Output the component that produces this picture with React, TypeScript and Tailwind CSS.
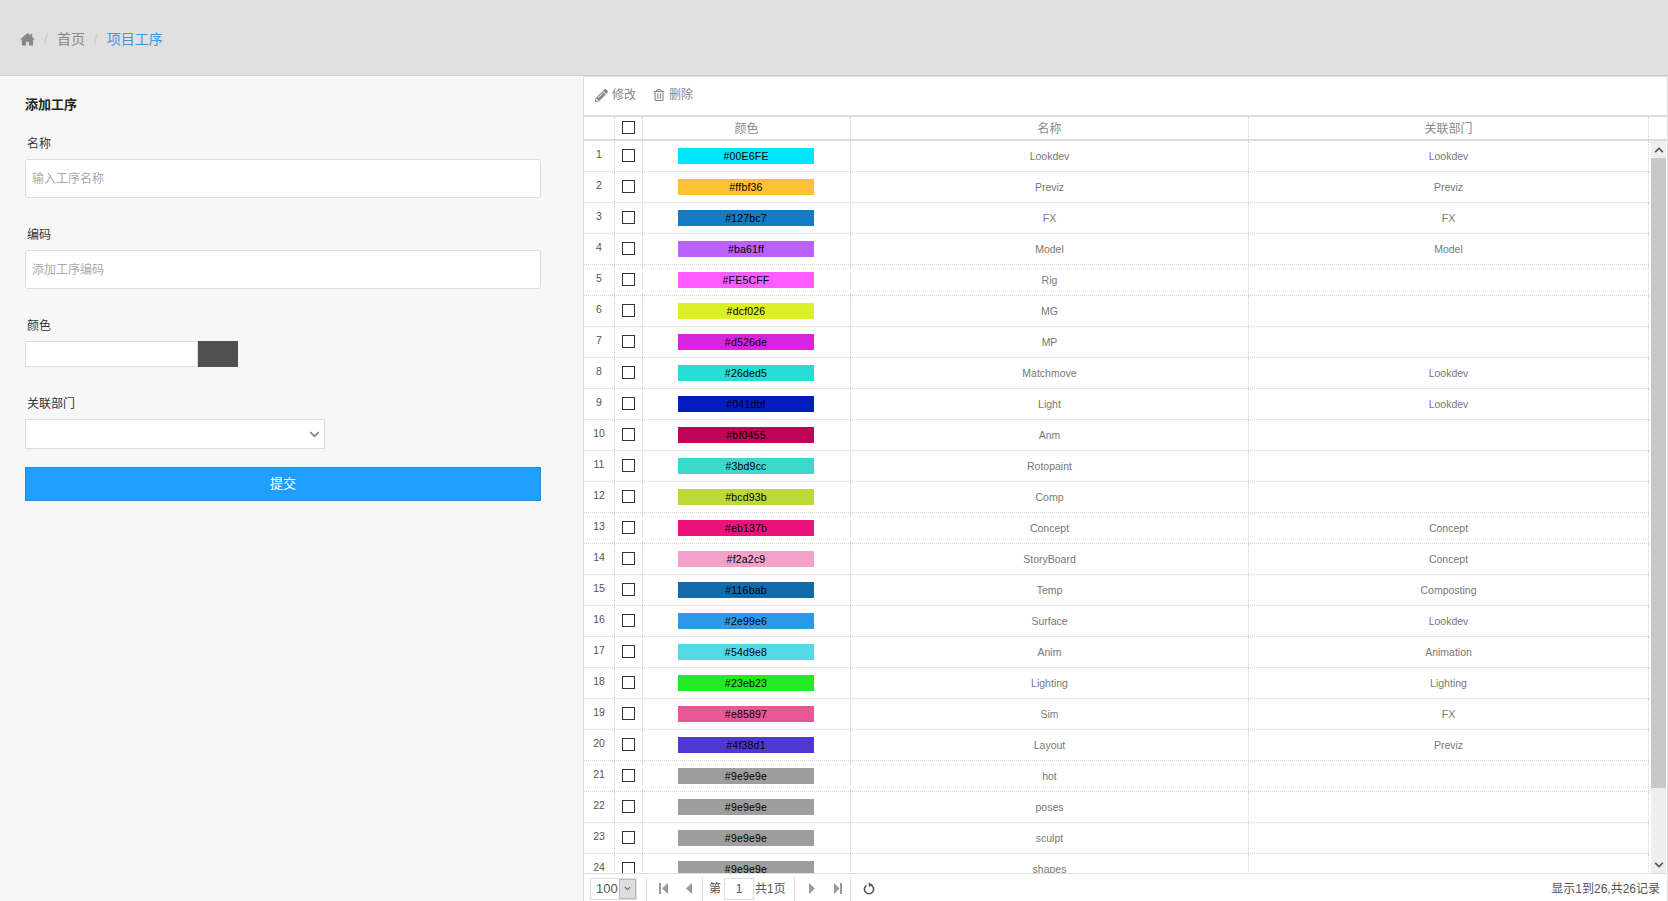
import { FaPencilAlt, FaRegTrashAlt, FaChevronDown, FaChevronUp } from "react-icons/fa";

const rows = [
  ["#00E6FE", "Lookdev", "Lookdev"],
  ["#ffbf36", "Previz", "Previz"],
  ["#127bc7", "FX", "FX"],
  ["#ba61ff", "Model", "Model"],
  ["#FE5CFF", "Rig", ""],
  ["#dcf026", "MG", ""],
  ["#d526de", "MP", ""],
  ["#26ded5", "Matchmove", "Lookdev"],
  ["#041dbf", "Light", "Lookdev"],
  ["#bf0455", "Anm", ""],
  ["#3bd9cc", "Rotopaint", ""],
  ["#bcd93b", "Comp", ""],
  ["#eb137b", "Concept", "Concept"],
  ["#f2a2c9", "StoryBoard", "Concept"],
  ["#116bab", "Temp", "Composting"],
  ["#2e99e6", "Surface", "Lookdev"],
  ["#54d9e8", "Anim", "Animation"],
  ["#23eb23", "Lighting", "Lighting"],
  ["#e85897", "Sim", "FX"],
  ["#4f38d1", "Layout", "Previz"],
  ["#9e9e9e", "hot", ""],
  ["#9e9e9e", "poses", ""],
  ["#9e9e9e", "sculpt", ""],
  ["#9e9e9e", "shapes", ""],
];

const cols = "grid grid-cols-[31px_28px_208px_398px_400px]";

function Field({ label, placeholder }: { label: string; placeholder: string }) {
  return (
    <div className="mb-[28px]">
      <div className="mb-[6px] pl-[2px] text-[12px] leading-[18px] text-[#333]">{label}</div>
      <input
        className="block h-[39px] w-[516px] rounded-[3px] border border-[#ddd] bg-white px-[6px] text-[12px] outline-none placeholder:text-[#aaa]"
        placeholder={placeholder}
      />
    </div>
  );
}

function Checkbox() {
  return <span className="block h-[13px] w-[13px] border border-[#333] bg-white" />;
}

function Sep({ className }: { className: string }) {
  return <span className={`h-[24px] w-px self-end bg-[#ddd] ${className}`} />;
}

export default function App() {
  return (
    <div className="flex h-[901px] flex-col overflow-hidden bg-white font-['Liberation_Sans','Noto_Sans_CJK_SC',sans-serif] text-[#777]">
      <header className="flex h-[76px] shrink-0 items-center gap-[9px] border-b border-[#ccc] bg-[#e0e0e0] pl-[20px] pt-[3px] text-[14px]">
        <svg className="h-[14px] w-[15px] fill-[#888]" viewBox="0 0 16 15">
          <path d="M8 1 0 8h2v6.500h4.500v-4h3v4H14V8h2l-3-2.700V2h-2v1.500z" />
        </svg>
        <span className="text-[#ccc]">/</span>
        <span className="text-[#888]">首页</span>
        <span className="text-[#ccc]">/</span>
        <span className="text-[#3c97dd]">项目工序</span>
      </header>
      <div className="flex min-h-0 flex-1">
        <aside className="w-[583px] shrink-0 bg-[#f7f7f7] pl-[25px] pt-[20px]">
          <h2 className="mb-[21px] text-[13px] leading-[18px] font-bold text-[#222]">添加工序</h2>
          <Field label="名称" placeholder="输入工序名称" />
          <Field label="编码" placeholder="添加工序编码" />
          <div className="mb-[28px]">
            <div className="mb-[6px] pl-[2px] text-[12px] leading-[18px] text-[#333]">颜色</div>
            <div className="flex h-[26px] w-[213px]">
              <span className="w-[173px] shrink-0 border border-[#ddd] bg-white" />
              <span className="w-[40px] shrink-0 bg-[#505050]" />
            </div>
          </div>
          <div className="mb-[18px]">
            <div className="mb-[6px] pl-[2px] text-[12px] leading-[18px] text-[#333]">关联部门</div>
            <div className="flex h-[30px] w-[300px] items-center justify-end border border-[#ddd] bg-white pr-[4px]">
              <FaChevronDown className="text-[11px] text-[#888]" />
            </div>
          </div>
          <button className="h-[34px] w-[516px] border border-[#1e8fe6] bg-[#1f9fff] text-[13px] text-white">提交</button>
        </aside>

        <main className="flex min-w-0 flex-1 flex-col border-x border-t border-[#ddd]">
          <div className="flex h-[40px] shrink-0 items-center border-b-2 border-[#ddd] pb-[2px] pl-[11px] text-[12px] text-[#888]">
            <span className="flex items-center gap-[4px]">
              <FaPencilAlt className="text-[13px]" />
              修改
            </span>
            <span className="ml-[17px] flex items-center gap-[4px]">
              <FaRegTrashAlt className="text-[12px]" />
              删除
            </span>
          </div>

          <div className={`${cols} h-[24px] shrink-0 border-b-2 border-[#ddd] text-[12px] text-[#888]`}>
            <span className="border-r border-dotted border-[#d4d4d4]" />
            <span className="flex items-center justify-center border-r border-dotted border-[#d4d4d4] pb-px">
              <Checkbox />
            </span>
            <span className="flex items-center justify-center border-r border-dotted border-[#d4d4d4] pt-px">颜色</span>
            <span className="flex items-center justify-center border-r border-dotted border-[#d4d4d4] pt-px">名称</span>
            <span className="flex items-center justify-center border-r border-dotted border-[#d4d4d4] pt-px">关联部门</span>
          </div>

          <div className="flex min-h-0 flex-1">
            <div className="w-[1065px] shrink-0 overflow-hidden">
              {rows.map((r, i) => (
                <div key={i} className={`${cols} h-[31px] border-b border-dotted border-[#d4d4d4] text-[10.5px]`}>
                  <span className="border-r border-dotted border-[#d4d4d4] text-center leading-[26px] text-[#555]">{i + 1}</span>
                  <span className="flex items-center justify-center border-r border-dotted border-[#d4d4d4] pb-px">
                    <Checkbox />
                  </span>
                  <span className="flex items-center justify-center border-r border-dotted border-[#d4d4d4] pr-px">
                    <span
                      className="h-[16px] w-[136px] text-center leading-[16px] tracking-[0.2px] text-black"
                      style={{ backgroundColor: r[0] }}
                    >
                      {r[0]}
                    </span>
                  </span>
                  <span className="flex items-center justify-center border-r border-dotted border-[#d4d4d4] pt-px">{r[1]}</span>
                  <span className="flex items-center justify-center border-r border-dotted border-[#d4d4d4] pt-px">{r[2]}</span>
                </div>
              ))}
            </div>
            <div className="flex w-[18px] shrink-0 pl-[2px] pr-px">
              <div className="flex w-[15px] flex-col bg-[#eee]">
                <div className="flex h-[17px] shrink-0 items-center justify-center">
                  <FaChevronUp className="text-[10px] text-[#555]" />
                </div>
                <div className="h-[630px] shrink-0 bg-[#c8c8c8]" />
                <div className="flex-1" />
                <div className="flex h-[17px] shrink-0 items-center justify-center">
                  <FaChevronDown className="text-[10px] text-[#555]" />
                </div>
              </div>
            </div>
          </div>

          <footer className="flex h-[28px] shrink-0 items-center border-t border-[#ddd] pr-[7px] pt-[2px] text-[12px] text-[#555]">
            <span className="ml-[6px] flex h-[22px] w-[47px] items-center border border-[#ddd] pl-[5px] text-[13px]">
              <span className="flex-1">100</span>
              <span className="flex h-full w-[17px] items-center justify-center border border-[#bbb] bg-[#ddd]">
                <FaChevronDown className="text-[7px] text-[#666]" />
              </span>
            </span>
            <Sep className="ml-[9px]" />
            <svg className="ml-[12px] h-[11px] w-[9px] fill-[#999]" viewBox="0 0 9 11"><rect x="0" y="0" width="2" height="11" /><path d="M9 0v11L3 5.500z" /></svg>
            <svg className="ml-[18px] h-[11px] w-[6px] fill-[#999]" viewBox="0 0 6 11"><path d="M6 0v11L0 5.500z" /></svg>
            <Sep className="ml-[10px]" />
            <span className="ml-[6px]">第</span>
            <span className="ml-[3px] h-[22px] w-[30px] border border-[#ddd] text-center leading-[20px]">1</span>
            <span className="ml-px">共1页</span>
            <Sep className="ml-[8px]" />
            <svg className="ml-[14px] h-[11px] w-[6px] fill-[#999]" viewBox="0 0 6 11"><path d="M0 0v11l6-5.500z" /></svg>
            <svg className="ml-[19px] h-[11px] w-[8px] fill-[#999]" viewBox="0 0 8 11"><path d="M0 0v11l5.500-5.500z" /><rect x="6" y="0" width="2" height="11" /></svg>
            <Sep className="ml-[8px]" />
            <svg className="ml-[12px] h-[13px] w-[12px]" viewBox="0 0 12 13">
              <path className="fill-none stroke-[#555] stroke-[1.6]" d="M3.500 3.300A4.600 4.600 0 1 0 8 3" />
              <path className="fill-[#555]" d="M5.500 0.500 9.500 2.500 6 5z" />
            </svg>
            <span className="ml-auto">显示1到26,共26记录</span>
          </footer>
        </main>
      </div>
    </div>
  );
}
